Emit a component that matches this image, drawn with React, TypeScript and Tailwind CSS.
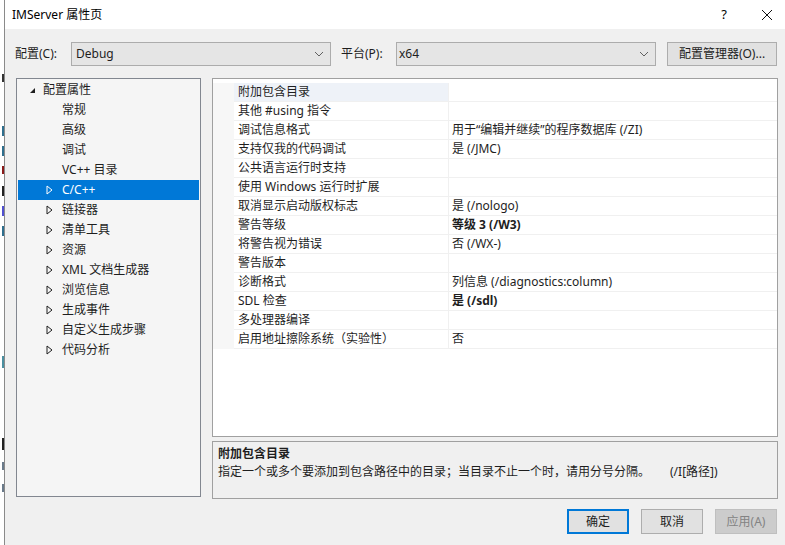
import React from "react";

const FONT = { fontFamily: '"Noto Sans", "Noto Sans CJK SC", sans-serif' };

const Expanded = () => (
  <svg width="7" height="7" viewBox="0 0 7 7" className="shrink-0">
    <path d="M6 1 L6 6 L1 6 Z" fill="#1e1e1e" />
  </svg>
);

const Collapsed = ({ white }: { white?: boolean }) => (
  <svg width="7" height="10" viewBox="0 0 7 10" className="shrink-0">
    <path d="M1 1 L6 5 L1 9 Z" fill="none" stroke={white ? "#ffffff" : "#1e1e1e"} strokeWidth="1" />
  </svg>
);

const Chevron = () => (
  <svg width="10" height="6" viewBox="0 0 10 6">
    <path d="M1 1 L5 5 L9 1" fill="none" stroke="#606060" strokeWidth="1" />
  </svg>
);

const treeChildren: { label: string; expandable: boolean; selected?: boolean }[] = [
  { label: "常规", expandable: false },
  { label: "高级", expandable: false },
  { label: "调试", expandable: false },
  { label: "VC++ 目录", expandable: false },
  { label: "C/C++", expandable: true, selected: true },
  { label: "链接器", expandable: true },
  { label: "清单工具", expandable: true },
  { label: "资源", expandable: true },
  { label: "XML 文档生成器", expandable: true },
  { label: "浏览信息", expandable: true },
  { label: "生成事件", expandable: true },
  { label: "自定义生成步骤", expandable: true },
  { label: "代码分析", expandable: true },
];

const rows: { name: string; value: string; bold?: boolean }[] = [
  { name: "附加包含目录", value: "" },
  { name: "其他 #using 指令", value: "" },
  { name: "调试信息格式", value: "用于“编辑并继续”的程序数据库 (/ZI)" },
  { name: "支持仅我的代码调试", value: "是 (/JMC)" },
  { name: "公共语言运行时支持", value: "" },
  { name: "使用 Windows 运行时扩展", value: "" },
  { name: "取消显示启动版权标志", value: "是 (/nologo)" },
  { name: "警告等级", value: "等级 3 (/W3)", bold: true },
  { name: "将警告视为错误", value: "否 (/WX-)" },
  { name: "警告版本", value: "" },
  { name: "诊断格式", value: "列信息 (/diagnostics:column)" },
  { name: "SDL 检查", value: "是 (/sdl)", bold: true },
  { name: "多处理器编译", value: "" },
  { name: "启用地址擦除系统（实验性）", value: "否" },
];

const marks: { h: number; c: string; gap: number }[] = [
  { gap: 74, h: 8, c: "#333333" },
  { gap: 44, h: 10, c: "#2e6f8e" },
  { gap: 10, h: 10, c: "#2e6f8e" },
  { gap: 10, h: 8, c: "#8b1a1a" },
  { gap: 12, h: 10, c: "#222222" },
  { gap: 10, h: 10, c: "#5050d0" },
  { gap: 10, h: 10, c: "#2e6f8e" },
  { gap: 120, h: 12, c: "#4a8fa0" },
  { gap: 70, h: 12, c: "#222222" },
  { gap: 12, h: 8, c: "#6a7a8a" },
  { gap: 14, h: 8, c: "#6a7a8a" },
];

export default function App() {
  return (
    <div className="flex w-[785px] h-[545px] overflow-hidden text-[12px] text-[#1e1e1e]" style={FONT}>
      {/* background window sliver */}
      <div className="w-[4px] h-full bg-white flex flex-col items-end overflow-hidden">
        {marks.map((m, i) => (
          <div key={i} className="w-[2px] shrink-0" style={{ height: m.h, marginTop: m.gap, backgroundColor: m.c }} />
        ))}
      </div>
      <div className="w-[1px] h-full bg-[#8a8a8a]" />
      <div className="flex-1 flex flex-col bg-[#f0f0f0]">
        {/* title bar */}
        <div className="h-[29px] bg-white flex items-center pl-[7px] pr-[12px]">
          <span className="text-[12px] text-black">IMServer 属性页</span>
          <div className="flex-1" />
          <span className="text-[13px] text-black mr-[34px]">?</span>
          <svg width="12" height="12" viewBox="0 0 12 12">
            <path d="M1 1 L11 11 M11 1 L1 11" stroke="#111" strokeWidth="1" />
          </svg>
        </div>

        {/* config row */}
        <div className="flex items-center mt-[12px] pl-[10px] h-[25px]">
          <span className="w-[56px]">配置(C):</span>
          <div className="w-[260px] h-[24px] bg-[#e5e5e5] border border-[#acacac] flex items-center pl-[4px] pr-[6px]">
            <span className="flex-1">Debug</span>
            <Chevron />
          </div>
          <span className="ml-[10px] w-[55px]">平台(P):</span>
          <div className="w-[260px] h-[24px] bg-[#e5e5e5] border border-[#acacac] flex items-center pl-[2px] pr-[6px]">
            <span className="flex-1">x64</span>
            <Chevron />
          </div>
          <div className="ml-[11px] w-[110px] h-[24px] bg-[#e1e1e1] border border-[#adadad] flex items-center justify-center">
            配置管理器(O)...
          </div>
        </div>

        {/* main */}
        <div className="flex mt-[12px] pl-[11px]">
          {/* tree */}
          <div className="w-[185px] h-[419px] bg-[#f5f5f5] border border-[#828790] pt-[1px] pl-[1px] pr-[1px]">
            <div className="h-[20px] flex items-center pl-[11px]">
              <Expanded />
              <span className="ml-[7px]">配置属性</span>
            </div>
            {treeChildren.map((c) => (
              <div
                key={c.label}
                className={
                  "h-[20px] flex items-center pl-[28px] " +
                  (c.selected ? "bg-[#0078d7] text-white" : "")
                }
              >
                <div className="w-[16px] flex items-center">
                  {c.expandable ? <Collapsed white={c.selected} /> : null}
                </div>
                <span>{c.label}</span>
              </div>
            ))}
          </div>

          {/* right column */}
          <div className="ml-[11px] w-[566px] flex flex-col">
            <div className="h-[359px] bg-white border border-[#a0a0a0] pt-[4px]">
              {rows.map((r, i) => (
                <div key={r.name} className="flex h-[19px]">
                  <div className="w-[21px] bg-[#f7f7f7]" />
                  <div
                    className={
                      "w-[214px] flex items-center pl-[4px] border-b border-[#f0f0f0] " +
                      (i === 0 ? "bg-[#eef2f8]" : "")
                    }
                  >
                    {r.name}
                  </div>
                  <div className="w-[1px] bg-[#f0f0f0]" />
                  <div
                    className={
                      "flex-1 flex items-center pl-[3px] border-b border-[#f0f0f0] " +
                      (r.bold ? "font-bold" : "")
                    }
                  >
                    {r.value}
                  </div>
                </div>
              ))}
            </div>
            <div className="mt-[4px] h-[58px] bg-[#f0f0f0] border border-[#a0a0a0] pl-[5px] pt-[3px]">
              <div className="font-bold leading-[18px]">附加包含目录</div>
              <div className="flex leading-[18px]">
                <span className="w-[452px]">指定一个或多个要添加到包含路径中的目录；当目录不止一个时，请用分号分隔。</span>
                <span>(/I[路径])</span>
              </div>
            </div>
          </div>
        </div>

        {/* buttons */}
        <div className="flex justify-end gap-[12px] mt-[10px] pr-[8px]">
          <div className="w-[62px] h-[25px] bg-[#e1e1e1] border-2 border-[#0078d7] flex items-center justify-center">
            确定
          </div>
          <div className="w-[62px] h-[25px] bg-[#e1e1e1] border border-[#adadad] flex items-center justify-center">
            取消
          </div>
          <div className="w-[62px] h-[25px] bg-[#cccccc] border border-[#bfbfbf] text-[#838383] flex items-center justify-center">
            应用(A)
          </div>
        </div>
      </div>
    </div>
  );
}
